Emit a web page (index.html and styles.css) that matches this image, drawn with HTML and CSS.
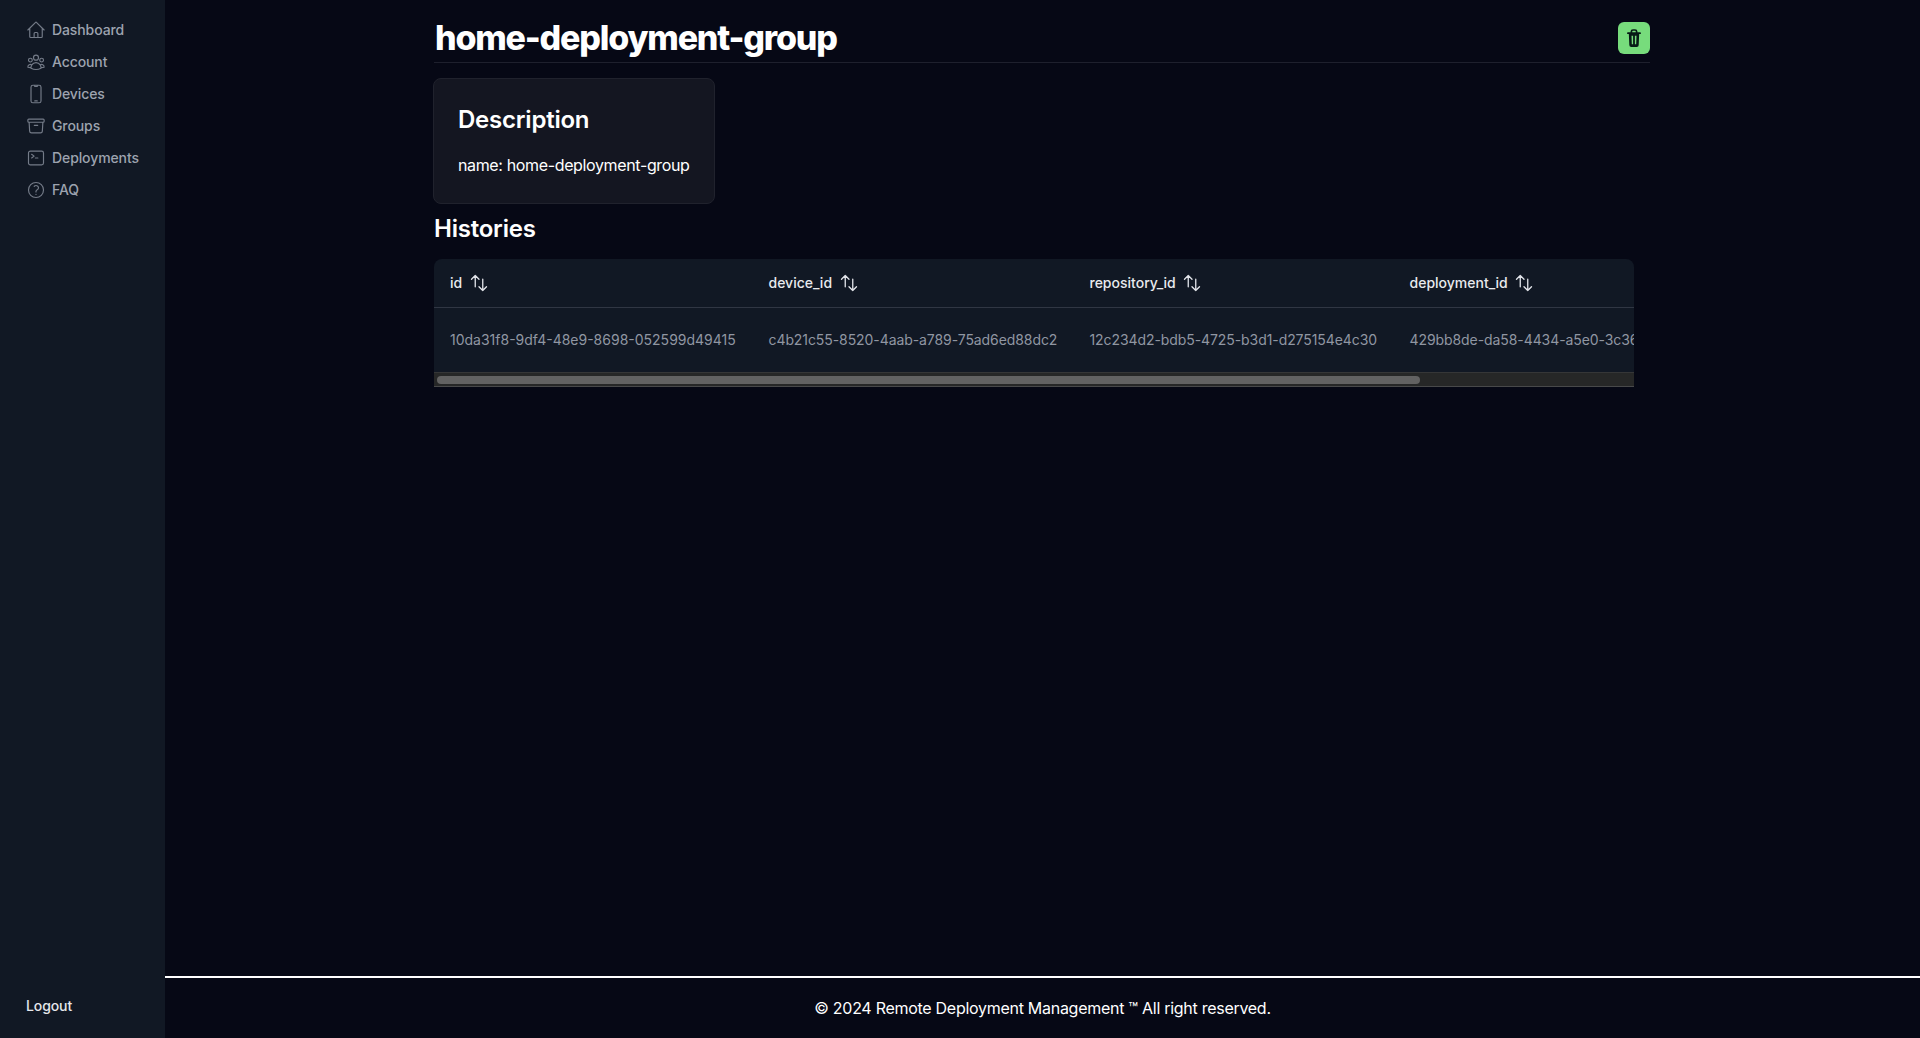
FILE: index.html
```html
<!DOCTYPE html>
<html lang="en">
<head>
<meta charset="utf-8">
<title>home-deployment-group</title>
<link rel="stylesheet" href="styles.css">
</head>
<body>
<svg class="sprite" width="0" height="0">
  <symbol id="sort" viewBox="0 0 24 24"><path d="M3 7.5 7.5 3m0 0L12 7.5M7.5 3v13.5m13.5 0L16.5 21m0 0L12 16.5m4.5 4.5V7.5"/></symbol>
</svg>
<div class="app">
  <aside class="sidebar">
    <nav class="nav">
      <a class="nav-item"><svg class="icon" viewBox="0 0 24 24"><path d="m2.25 12 8.954-8.955c.44-.439 1.152-.439 1.591 0L21.75 12M4.5 9.75v10.125c0 .621.504 1.125 1.125 1.125H9.75v-4.875c0-.621.504-1.125 1.125-1.125h2.25c.621 0 1.125.504 1.125 1.125V21h4.125c.621 0 1.125-.504 1.125-1.125V9.75M8.25 21h8.25"/></svg>Dashboard</a>
      <a class="nav-item"><svg class="icon" viewBox="0 0 24 24"><path d="M18 18.72a9.094 9.094 0 0 0 3.741-.479 3 3 0 0 0-4.682-2.72m.94 3.198.001.031c0 .225-.012.447-.037.666A11.944 11.944 0 0 1 12 21c-2.17 0-4.207-.576-5.963-1.584A6.062 6.062 0 0 1 6 18.719m12 0a5.971 5.971 0 0 0-.941-3.197m0 0A5.995 5.995 0 0 0 12 12.75a5.995 5.995 0 0 0-5.058 2.772m0 0a3 3 0 0 0-4.681 2.72 8.986 8.986 0 0 0 3.74.477m.94-3.197a5.971 5.971 0 0 0-.94 3.197M15 6.75a3 3 0 1 1-6 0 3 3 0 0 1 6 0Zm6 3a2.25 2.25 0 1 1-4.5 0 2.25 2.25 0 0 1 4.5 0Zm-13.5 0a2.25 2.25 0 1 1-4.5 0 2.25 2.25 0 0 1 4.5 0Z"/></svg>Account</a>
      <a class="nav-item"><svg class="icon" viewBox="0 0 24 24"><path d="M10.5 1.5H8.25A2.25 2.25 0 0 0 6 3.75v16.5a2.25 2.25 0 0 0 2.25 2.25h7.5A2.25 2.25 0 0 0 18 20.25V3.75a2.25 2.25 0 0 0-2.25-2.25H13.5m-3 0V3h3V1.5m-3 0h3m-3 18.75h3"/></svg>Devices</a>
      <a class="nav-item"><svg class="icon" viewBox="0 0 24 24"><path d="m20.25 7.5-.625 10.632a2.25 2.25 0 0 1-2.247 2.118H6.622a2.25 2.25 0 0 1-2.247-2.118L3.75 7.5M10 11.25h4M3.375 7.5h17.25c.621 0 1.125-.504 1.125-1.125v-1.5c0-.621-.504-1.125-1.125-1.125H3.375c-.621 0-1.125.504-1.125 1.125v1.5c0 .621.504 1.125 1.125 1.125Z"/></svg>Groups</a>
      <a class="nav-item"><svg class="icon" viewBox="0 0 24 24"><path d="m6.75 7.5 3 2.25-3 2.25m4.5 0h3m-9 8.25h13.5A2.25 2.25 0 0 0 21 18V6a2.25 2.25 0 0 0-2.25-2.25H5.25A2.25 2.25 0 0 0 3 6v12a2.25 2.25 0 0 0 2.25 2.25Z"/></svg>Deployments</a>
      <a class="nav-item"><svg class="icon" viewBox="0 0 24 24"><path d="M9.879 7.519c1.171-1.025 3.071-1.025 4.242 0 1.172 1.025 1.172 2.687 0 3.712-.203.179-.43.326-.67.442-.745.361-1.45.999-1.45 1.827v.75M21 12a9 9 0 1 1-18 0 9 9 0 0 1 18 0Zm-9 5.25h.008v.008H12v-.008Z"/></svg>FAQ</a>
    </nav>
    <a class="logout">Logout</a>
  </aside>
  <div class="page">
    <main class="content">
      <header class="page-header">
        <h1 class="title">home-deployment-group</h1>
        <button class="delete" aria-label="Delete"><svg class="trash" viewBox="0 0 14 18"><path class="trash-line" d="M4.4 3.600V2.600a1.600 1.600 0 0 1 1.600-1.600h2a1.600 1.600 0 0 1 1.600 1.600v1M.9 4.200h12.200"/><path class="trash-body" fill-rule="evenodd" d="M1.800 4.200h10.400l-.5 11.800a2 2 0 0 1-2 2H4.300a2 2 0 0 1-2-2ZM4.500 6.700l.3 8.600h1.300V6.700ZM7.900 6.700v8.600h1.300l.3-8.600Z"/></svg></button>
      </header>
      <section class="card">
        <h2 class="heading">Description</h2>
        <p class="card-text">name: home-deployment-group</p>
      </section>
      <h2 class="heading histories">Histories</h2>
      <div class="table-box">
        <div class="grid head">
          <div class="cell">id<svg class="sort"><use href="#sort"/></svg></div>
          <div class="cell">device_id<svg class="sort"><use href="#sort"/></svg></div>
          <div class="cell">repository_id<svg class="sort"><use href="#sort"/></svg></div>
          <div class="cell">deployment_id<svg class="sort"><use href="#sort"/></svg></div>
        </div>
        <div class="grid row">
          <div class="cell">10da31f8-9df4-48e9-8698-052599d49415</div>
          <div class="cell tight">c4b21c55-8520-4aab-a789-75ad6ed88dc2</div>
          <div class="cell tight">12c234d2-bdb5-4725-b3d1-d275154e4c30</div>
          <div class="cell tight">429bb8de-da58-4434-a5e0-3c36</div>
        </div>
        <div class="scrollbar"><div class="thumb"></div></div>
      </div>
    </main>
    <footer class="footer">© 2024 Remote Deployment Management ™ All right reserved.</footer>
  </div>
</div>
</body>
</html>
```
FILE: styles.css
```css
* { box-sizing: border-box; margin: 0; padding: 0; }
body { background: #060815; color: #fff; font-family: Inter, "Liberation Sans", sans-serif; font-size: 16px; line-height: 24px; overflow: hidden; }
.sprite { display: block; }
.app { display: flex; height: 1038px; }
.sidebar { width: 165px; background: #111824; display: flex; flex-direction: column; justify-content: space-between; padding: 14px 0 19px 26px; font-size: 14px; font-weight: 500; letter-spacing: -0.1px; }
.nav { display: flex; flex-direction: column; }
.nav-item { display: flex; align-items: center; gap: 6px; height: 32px; color: #9da3af; }
.icon { width: 20px; height: 20px; fill: none; stroke: #747b88; stroke-width: 1.4; stroke-linecap: round; stroke-linejoin: round; }
.logout { color: #e5e7eb; line-height: 26px; }
.page { flex: 1; display: flex; flex-direction: column; }
.content { flex: 1; width: 1216px; margin-left: 269px; padding-top: 17px; }
.page-header { display: flex; justify-content: space-between; align-items: center; height: 46px; padding-bottom: 4px; border-bottom: 1px solid #1e202d; }
.title { font-size: 34px; line-height: 40px; font-weight: 800; letter-spacing: -1.2px; padding-left: 1px; }
.delete { display: flex; align-items: center; justify-content: center; width: 32px; height: 32px; border: 0; border-radius: 6px; background: #77dc7c; }
.trash { width: 14px; height: 18px; }
.trash-line { fill: none; stroke: #071a16; stroke-width: 1.7; stroke-linecap: round; }
.trash-body { fill: #071a16; }
.card { width: 282px; height: 126px; margin: 15px 0 0 -1px; padding: 25px 24px; border: 1px solid #20222d; border-radius: 8px; background: #141621; }
.heading { font-size: 24px; line-height: 32px; font-weight: 600; letter-spacing: -0.22px; }
.card-text { margin-top: 17px; padding-left: 0; white-space: nowrap; letter-spacing: -0.36px; }
.histories { margin-top: 9px; }
.table-box { width: 1200px; margin-top: 14px; border-radius: 8px 8px 0 0; background: #111824; overflow: hidden; font-size: 14px; line-height: 20px; }
.grid { display: grid; grid-template-columns: 318.500px 321px 320px 240.500px; }
.cell { display: flex; align-items: center; gap: 6.500px; padding-left: 16px; white-space: nowrap; overflow: hidden; }
.tight { letter-spacing: -0.08px; }
.head { height: 49px; border-bottom: 1px solid #303643; color: #e8eaee; font-weight: 500; }
.row { height: 64px; color: #9096a2; }
.sort { width: 20px; height: 20px; fill: none; stroke: #e0e2e8; stroke-width: 1.6; stroke-linecap: round; stroke-linejoin: round; }
.scrollbar { height: 15px; padding: 3px; background: #262727; border-top: 1px solid #353637; border-bottom: 1px solid #48494a; }
.thumb { width: 983px; height: 8px; border-radius: 4px; background: #626262; }
.footer { height: 62px; border-top: 2px solid #fff; padding-top: 18px; text-align: center; letter-spacing: -0.28px; }
```
